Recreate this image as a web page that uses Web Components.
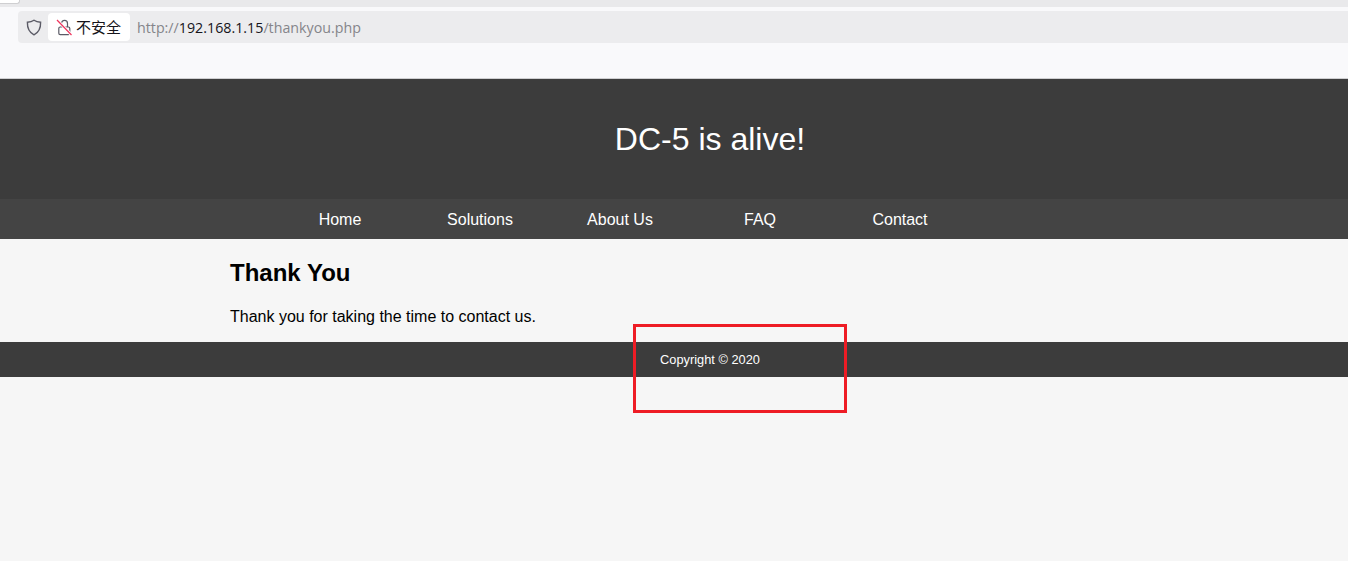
<!DOCTYPE html>
<html lang="en">
<head>
<meta charset="utf-8">
<title>Thank You</title>
<style>
  html, body { margin: 0; padding: 0; height: 100%; background: #f6f6f6; }
  body { display: flex; flex-direction: column; font-family: "Liberation Sans", Arial, sans-serif; overflow: hidden; }
</style>
</head>
<body>
<browser-bar></browser-bar>
<site-header>DC-5 is alive!</site-header>
<site-nav>
  <nav-link>Home</nav-link>
  <nav-link>Solutions</nav-link>
  <nav-link>About Us</nav-link>
  <nav-link>FAQ</nav-link>
  <nav-link>Contact</nav-link>
</site-nav>
<site-content>
  <h2 slot="title">Thank You</h2>
  Thank you for taking the time to contact us.
</site-content>
<site-footer>Copyright © 2020</site-footer>

<script>
class BrowserBar extends HTMLElement {
  constructor() {
    super();
    this.attachShadow({ mode: "open" });
  }

  static get styles() {
    return `
      :host {
        display: block;
        height: 79px;
        box-sizing: border-box;
        background: #f9f9fb;
        border-bottom: 1px solid #cfcfd1;
      }
      .tabs {
        height: 7px;
        background: #e9e9eb;
        display: flex;
      }
      .tab {
        width: 19px;
        height: 3px;
        background: #fff;
        border-radius: 0 0 3px 0;
        border: solid #cfcfd1;
        border-width: 0 1px 1px 0;
      }
      .row {
        height: 4px;
      }
      .urlbar {
        margin-left: 18px;
        height: 32px;
        background: #ececee;
        border-radius: 4px 0 0 4px;
        display: flex;
        align-items: center;
      }
      .shield {
        width: 16px;
        height: 17px;
        margin-left: 8px;
        flex: none;
      }
      .badge {
        margin-left: 6px;
        height: 28px;
        width: 82px;
        background: #fff;
        border-radius: 4px;
        display: flex;
        align-items: center;
        flex: none;
      }
      .lock {
        width: 16px;
        height: 17px;
        margin-left: 8px;
        flex: none;
      }
      .label {
        margin: 0 0 2px 4px;
        font: 15px "Noto Sans CJK SC", sans-serif;
        color: #15141a;
      }
      .url {
        margin-left: 7px;
        font: 14.25px "Open Sans", sans-serif;
        color: #85858a;
        white-space: nowrap;
      }
      .url b {
        font-weight: 400;
        color: #15141a;
      }
    `;
  }

  connectedCallback() {
    this.shadowRoot.innerHTML = `
    <style>${BrowserBar.styles}</style>
    <div class="tabs"><div class="tab"></div></div>
    <div class="row"></div>
    <div class="urlbar">
      <svg class="shield" viewBox="0 0 16 17" fill="none" stroke="#5b5b66" stroke-width="1.4">
        <path d="M8 1.2 C6 2.6 4 3.1 1.4 3.2 C1.2 9 3.4 13.4 8 15.8 C12.6 13.4 14.8 9 14.6 3.2 C12 3.1 10 2.6 8 1.2 Z"/>
      </svg>
      <div class="badge">
        <svg class="lock" viewBox="0 0 16 17" fill="none">
          <path d="M5.5 8 V4.4 C5.5 2.6 6.8 1.4 8.5 1.4 C10.2 1.4 11.5 2.6 11.5 4.4 V8" stroke="#5b5b66" stroke-width="1.2"/>
          <rect x="2.8" y="8" width="11" height="7.6" rx="1.4" stroke="#5b5b66" stroke-width="1.2"/>
          <path d="M1 1 L15.5 16" stroke="#fff" stroke-width="3"/>
          <path d="M1 1 L15.5 16" stroke="#f0335c" stroke-width="1.2"/>
        </svg>
        <span class="label">不安全</span>
      </div>
      <span class="url">http://<b>192.168.1.15</b>/thankyou.php</span>
    </div>`;
  }
}
customElements.define("browser-bar", BrowserBar);

class SiteHeader extends HTMLElement {
  constructor() {
    super();
    this.attachShadow({ mode: "open" }).innerHTML = `
    <style>
      :host {
        display: flex;
        height: 120px;
        background: #3c3c3c;
        justify-content: center;
        align-items: center;
        box-sizing: border-box;
        padding-left: 72px;
        color: #fff;
        font-size: 32px;
      }
    </style>
    <slot></slot>`;
  }
}
customElements.define("site-header", SiteHeader);

class SiteNav extends HTMLElement {
  constructor() {
    super();
    this.attachShadow({ mode: "open" }).innerHTML = `
    <style>
      :host {
        display: flex;
        height: 40px;
        box-sizing: border-box;
        padding: 2px 0 0 270px;
        background: #444;
      }
    </style>
    <slot></slot>`;
  }
}
customElements.define("site-nav", SiteNav);

class NavLink extends HTMLElement {
  constructor() {
    super();
    this.attachShadow({ mode: "open" }).innerHTML = `
    <style>
      :host {
        display: flex;
        width: 140px;
        justify-content: center;
        align-items: center;
        color: #fff;
        font-size: 16px;
      }
    </style>
    <slot></slot>`;
  }
}
customElements.define("nav-link", NavLink);

class SiteContent extends HTMLElement {
  constructor() {
    super();
    this.attachShadow({ mode: "open" }).innerHTML = `
    <style>
      :host {
        display: block;
        height: 103px;
        box-sizing: border-box;
        padding: 20px 0 0 230px;
        color: #000;
        font-size: 16px;
        line-height: 18px;
      }
      ::slotted(h2) {
        margin: 0 0 21px;
        font-size: 24px;
        line-height: 28px;
        font-weight: 700;
      }
    </style>
    <slot name="title"></slot>
    <slot></slot>`;
  }
}
customElements.define("site-content", SiteContent);

class SiteFooter extends HTMLElement {
  constructor() {
    super();
    this.attachShadow({ mode: "open" }).innerHTML = `
    <style>
      :host {
        display: flex;
        position: relative;
        height: 35px;
        background: #3c3c3c;
        justify-content: center;
        align-items: center;
        padding-left: 72px;
        color: #fff;
        font-size: 12.8px;
      }
      /* red box drawn over the screenshot */
      .mark {
        position: absolute;
        left: 633px;
        top: -18px;
        width: 208px;
        height: 83px;
        border: 3px solid #ee1c25;
        pointer-events: none;
      }
    </style>
    <slot></slot>
    <div class="mark"></div>`;
  }
}
customElements.define("site-footer", SiteFooter);
</script>
</body>
</html>
